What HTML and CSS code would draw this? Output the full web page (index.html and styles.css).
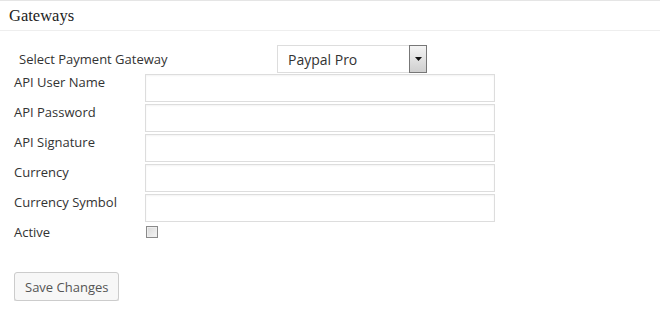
FILE: index.html
```html
<!DOCTYPE html>
<html lang="en">
<head>
    <meta charset="UTF-8">
    <title>Gateways</title>
    <link rel="stylesheet" href="styles.css">
</head>
<body>
    <div class="postbox">
        <h3 class="postbox-title">Gateways</h3>
        <div class="inside">
            <div class="gateway-row">
                <label class="gateway-label" for="gateway">Select Payment Gateway</label>
                <span class="select-wrap">
                    <select id="gateway" class="gateway-select">
                        <option>Paypal Pro</option>
                    </select>
                    <span class="select-arrow">
                        <svg width="7" height="4" viewBox="0 0 7 4"><path d="M0 0h7L3.5 4z" fill="#111"/></svg>
                    </span>
                </span>
            </div>
            <div class="fields">
                <label class="field-label">API User Name</label>
                <input class="field-input" type="text">
                <label class="field-label">API Password</label>
                <input class="field-input" type="text">
                <label class="field-label">API Signature</label>
                <input class="field-input" type="text">
                <label class="field-label">Currency</label>
                <input class="field-input" type="text">
                <label class="field-label">Currency Symbol</label>
                <input class="field-input" type="text">
                <label class="field-label">Active</label>
                <span class="check-cell"><input class="field-check" type="checkbox"></span>
            </div>
            <button class="save-button">Save Changes</button>
        </div>
    </div>
</body>
</html>
```

FILE: styles.css
```css
body {
    margin: 0;
    background: #fff;
    font-family: "Open Sans", sans-serif;
    font-size: 13px;
    color: #333;
}
.postbox {
    border-top: 1px solid #e5e5e5;
    background: #fff;
}
.postbox-title {
    margin: 0;
    height: 29px;
    padding-left: 9px;
    border-bottom: 1px solid #eee;
    font-family: "Liberation Serif", serif;
    font-size: 16.5px;
    font-weight: normal;
    line-height: 30px;
    color: #222;
}
.inside {
    padding: 14px 0 0 14px;
}
.gateway-row {
    display: flex;
    align-items: center;
    height: 28px;
}
.gateway-label {
    width: 258px;
    padding-left: 5px;
}
.select-wrap {
    position: relative;
    display: inline-block;
}
.gateway-select {
    appearance: none;
    -webkit-appearance: none;
    width: 150px;
    height: 28px;
    margin: 0;
    padding: 0 0 0 10px;
    border: 1px solid #ddd;
    border-radius: 0;
    background: #fff;
    font-family: "Open Sans", sans-serif;
    font-size: 14px;
    color: #333;
}
.select-arrow {
    position: absolute;
    right: 0;
    top: 0;
    width: 16px;
    height: 26px;
    border: 1px solid #777;
    background: linear-gradient(#f4f4f4, #cfcfcf);
    display: flex;
    align-items: center;
    justify-content: center;
}
.fields {
    display: grid;
    grid-template-columns: 131px 350px;
    row-gap: 2px;
    margin-top: 1px;
}
.field-label {
    line-height: 16px;
}
.field-input {
    height: 28px;
    margin: 0;
    box-sizing: border-box;
    border: 1px solid #ddd;
    box-shadow: inset 0 1px 2px rgba(0, 0, 0, 0.05);
    background: #fff;
}
.check-cell {
    height: 16px;
}
.field-check {
    appearance: none;
    -webkit-appearance: none;
    display: block;
    width: 12px;
    height: 12px;
    margin: 2px 0 0 1px;
    border: 1px solid #8a8a8a;
    border-radius: 0;
    background: linear-gradient(135deg, #d8d8d8, #f6f6f6);
    box-shadow: inset 0 0 0 1px #eee;
}
.save-button {
    display: block;
    margin-top: 32px;
    height: 29px;
    padding: 0 10px;
    border: 1px solid #ccc;
    border-radius: 3px;
    background: #f7f7f7;
    box-shadow: 0 1px 0 #ddd;
    font-family: "Open Sans", sans-serif;
    font-size: 13px;
    color: #555;
}
```
